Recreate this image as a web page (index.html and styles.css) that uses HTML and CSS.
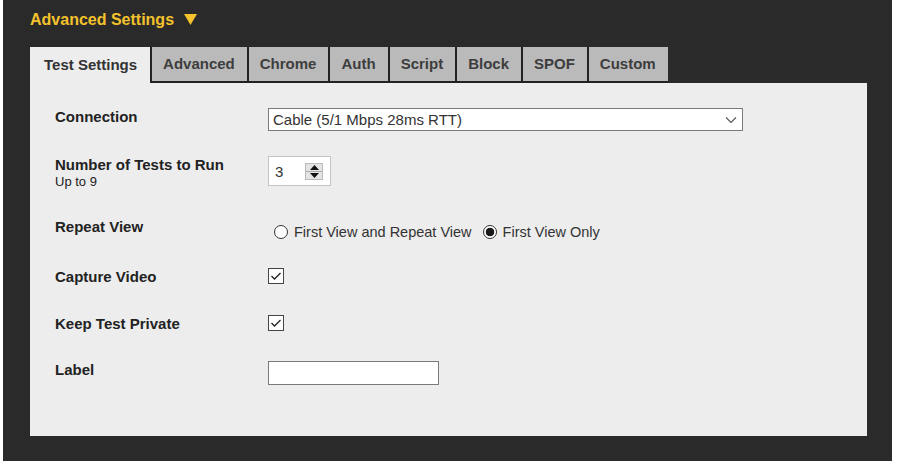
FILE: index.html
```html
<!DOCTYPE html>
<html>
<head>
<meta charset="utf-8">
<link rel="stylesheet" href="styles.css">
</head>
<body>
<div class="frame">
  <h2 class="title">Advanced Settings <svg class="arrow" width="13" height="11" viewBox="0 0 13 11"><path d="M0 0 H13 L6.5 11 Z" fill="#f3c22c"/></svg></h2>
  <ul class="tabs">
    <li class="tab active">Test Settings</li>
    <li class="tab">Advanced</li>
    <li class="tab">Chrome</li>
    <li class="tab">Auth</li>
    <li class="tab">Script</li>
    <li class="tab">Block</li>
    <li class="tab">SPOF</li>
    <li class="tab">Custom</li>
  </ul>
  <div class="panel">
    <div class="row row-conn">
      <div class="label">Connection</div>
      <div class="select-wrap">
        <select class="select"><option>Cable (5/1 Mbps 28ms RTT)</option></select>
        <svg class="chev" width="12" height="8" viewBox="0 0 12 8"><path d="M1 1.5 L6 6.5 L11 1.5" fill="none" stroke="#555" stroke-width="1.1"/></svg>
      </div>
    </div>
    <div class="row row-num">
      <div class="label">Number of Tests to Run<small>Up to 9</small></div>
      <div class="number">
        <input class="num-input" type="text" value="3">
        <span class="spin">
          <span class="spin-btn"><svg width="9" height="5" viewBox="0 0 9 5"><path d="M4.5 0 L9 5 L0 5 Z" fill="#111"/></svg></span>
          <span class="spin-btn"><svg width="9" height="5" viewBox="0 0 9 5"><path d="M0 0 L9 0 L4.5 5 Z" fill="#111"/></svg></span>
        </span>
      </div>
    </div>
    <div class="row row-repeat">
      <div class="label">Repeat View</div>
      <div class="radios">
        <label class="opt"><span class="radio"></span>First View and Repeat View</label>
        <label class="opt"><span class="radio checked"></span>First View Only</label>
      </div>
    </div>
    <div class="row row-check">
      <div class="label">Capture Video</div>
      <span class="check"><svg width="12" height="10" viewBox="0 0 12 10"><path d="M1.5 5 L4.5 8 L10.5 2" fill="none" stroke="#222" stroke-width="1.3"/></svg></span>
    </div>
    <div class="row row-check">
      <div class="label">Keep Test Private</div>
      <span class="check"><svg width="12" height="10" viewBox="0 0 12 10"><path d="M1.5 5 L4.5 8 L10.5 2" fill="none" stroke="#222" stroke-width="1.3"/></svg></span>
    </div>
    <div class="row">
      <div class="label">Label</div>
      <input class="text-input" type="text">
    </div>
  </div>
</div>
</body>
</html>
```
FILE: styles.css
```css
* { box-sizing: border-box; }
body {
  margin: 0;
  background: #fff;
  font-family: "Liberation Sans", Arial, sans-serif;
}
.frame {
  margin-left: 3px;
  width: 889px;
  height: 461px;
  background: #2a2a2a;
  padding: 10px 25px 25px 27px;
  display: flex;
  flex-direction: column;
}
.title {
  margin: 0 0 17px;
  font-size: 16px;
  line-height: 20px;
  font-weight: bold;
  color: #f3c22c;
  display: flex;
  align-items: center;
}
.arrow {
  margin-left: 10px;
  margin-top: -2px;
}
.tabs {
  list-style: none;
  margin: 0;
  padding: 0;
  display: flex;
  height: 36px;
}
.tab {
  background: #bababa;
  color: #3d3d3d;
  font-size: 15px;
  font-weight: bold;
  line-height: 34px;
  padding: 0 12px 0 11px;
  border-left: 2px solid #222;
  border-bottom: 2px solid #222;
}
.tab.active {
  background: #ededed;
  color: #333;
  border: none;
  padding: 0 13px 0 14px;
  line-height: 36px;
}
.panel {
  flex: 1;
  background: #ededed;
  padding: 25px 25px 0 25px;
  color: #222;
}
.row {
  display: flex;
  align-items: flex-start;
}
.label {
  width: 213px;
  font-size: 15px;
  font-weight: bold;
  line-height: 16px;
  padding-top: 1px;
}
.label small {
  display: block;
  font-size: 13px;
  font-weight: normal;
  line-height: 16px;
  margin-top: 1px;
}
.row-conn { height: 48px; }
.row-num { height: 62px; }
.row-repeat { height: 50px; }
.row-check { height: 47px; }
.row-check + .row-check { height: 46px; }

.select-wrap {
  position: relative;
  width: 475px;
  height: 23px;
}
.select {
  appearance: none;
  -webkit-appearance: none;
  width: 100%;
  height: 23px;
  border: 1px solid #7a7a7a;
  border-radius: 0;
  background: #fff;
  font-family: "Liberation Sans", Arial, sans-serif;
  font-size: 15px;
  color: #333;
  padding: 0 0 0 4px;
  margin: 0;
}
.chev {
  position: absolute;
  right: 6px;
  top: 8px;
  pointer-events: none;
}
.number {
  display: flex;
  align-items: center;
  width: 63px;
  height: 30px;
  background: #fff;
  border: 1px solid #c4c4c4;
}
.num-input {
  width: 36px;
  border: none;
  outline: none;
  padding: 0 0 0 6px;
  font-family: "Liberation Sans", Arial, sans-serif;
  font-size: 15px;
  color: #333;
  background: transparent;
}
.spin {
  display: flex;
  flex-direction: column;
  width: 18px;
  height: 17px;
  border: 1px solid #bbb;
  background: #e4e4e4;
}
.spin-btn {
  flex: 1;
  display: flex;
  align-items: center;
  justify-content: center;
}
.spin-btn + .spin-btn { border-top: 1px solid #aaa; }
.radios {
  display: flex;
  gap: 11px;
  padding-top: 6px;
  font-size: 14.5px;
  color: #333;
}
.opt {
  display: flex;
  align-items: center;
  line-height: 16px;
}
.radio {
  width: 14px;
  height: 14px;
  border-radius: 50%;
  border: 1px solid #333;
  background: #fff;
  margin: 0 6px 0 6px;
  display: inline-block;
}
.opt + .opt .radio { margin-left: 0; }
.radio.checked {
  background: radial-gradient(circle, #1a1a1a 0 4px, #fff 4.6px);
}
.check {
  width: 16px;
  height: 16px;
  border: 1px solid #444;
  background: #fff;
  display: flex;
  align-items: center;
  justify-content: center;
}
.text-input {
  width: 171px;
  height: 24px;
  border: 1px solid #7a7a7a;
  background: #fff;
  margin: 0;
  padding: 0 4px;
}
```
